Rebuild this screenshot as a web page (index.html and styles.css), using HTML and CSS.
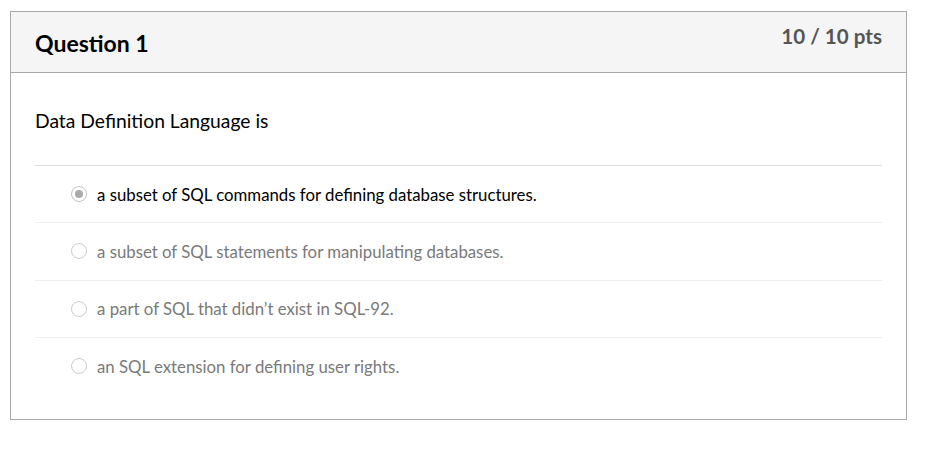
FILE: index.html
```html
<!DOCTYPE html>
<html>
<head>
<meta charset="utf-8">
<link rel="stylesheet" href="styles.css">
</head>
<body>
<div class="card">
  <div class="header">
    <h2 class="title">Question 1</h2>
    <span class="pts">10 / 10 pts</span>
  </div>
  <div class="body">
    <p class="qtext">Data Definition Language is</p>
    <div class="answers">
      <div class="answer selected">
        <span class="radio checked"></span>
        <span class="label">a subset of SQL commands for defining database structures.</span>
      </div>
      <div class="answer">
        <span class="radio"></span>
        <span class="label">a subset of SQL statements for manipulating databases.</span>
      </div>
      <div class="answer">
        <span class="radio"></span>
        <span class="label">a part of SQL that didn’t exist in SQL-92.</span>
      </div>
      <div class="answer">
        <span class="radio"></span>
        <span class="label">an SQL extension for defining user rights.</span>
      </div>
    </div>
  </div>
</div>
</body>
</html>
```
FILE: styles.css
```css
html, body {
  margin: 0;
  padding: 0;
  background: #fff;
}
body {
  padding: 11px 10px;
  font-family: Lato, "Liberation Sans", sans-serif;
}
.card {
  width: 895px;
  border: 1px solid #aaa;
  box-sizing: content-box;
}
.header {
  background: #f5f5f5;
  border-bottom: 1px solid #aaa;
  height: 60px;
  display: flex;
  justify-content: space-between;
  align-items: flex-start;
  padding: 0 24px;
}
.title {
  margin: 0;
  padding-top: 17px;
  font-size: 23px;
  font-weight: 700;
  line-height: 28px;
  color: #000;
}
.pts {
  padding-top: 12px;
  font-size: 20.6px;
  font-weight: 700;
  line-height: 24px;
  color: #555;
}
.body {
  padding: 0 24px 25px;
}
.qtext {
  margin: 0;
  padding: 36px 0 33px;
  font-size: 19.3px;
  line-height: 23px;
  color: #000;
}
.answers {
  border-top: 1px solid #ddd;
}
.answer {
  display: flex;
  align-items: center;
  height: 56.33px;
  padding-left: 36px;
  border-top: 1px solid #eee;
}
.answer:first-child {
  border-top: none;
}
.radio {
  width: 14px;
  height: 14px;
  border: 1px solid #ccc;
  border-radius: 50%;
  box-sizing: content-box;
  position: relative;
  flex: none;
  margin-right: 10px;
  background: #fff;
}
.radio.checked {
  border-color: #c4c4c4;
}
.radio.checked::after {
  content: "";
  position: absolute;
  left: 3px;
  top: 3px;
  width: 8px;
  height: 8px;
  border-radius: 50%;
  background: #aaa;
}
.label {
  font-size: 16.8px;
  color: #7a7a7a;
}
.answer.selected .label {
  color: #000;
}
```
